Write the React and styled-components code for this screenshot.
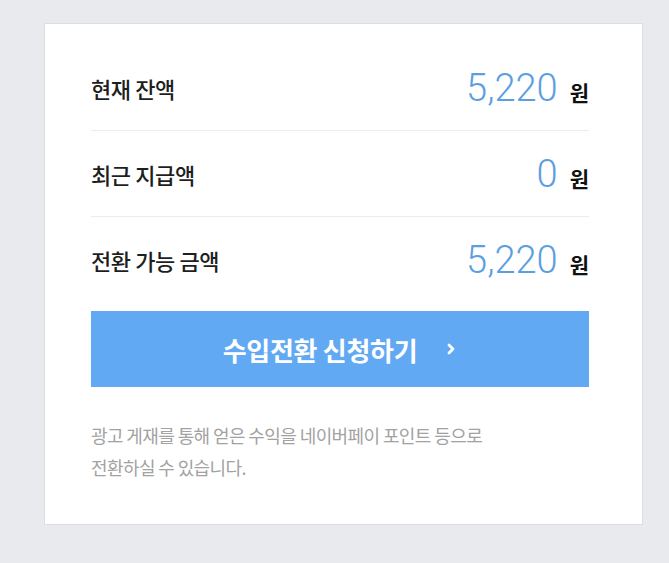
import React from 'react';
import styled, { createGlobalStyle } from 'styled-components';

const GlobalStyle = createGlobalStyle`
  body {
    margin: 0;
    background: #e9eaed;
    font-family: 'Noto Sans CJK KR', 'Noto Sans', sans-serif;
  }
`;

const Page = styled.div`
  padding: 23px 0 40px 44px;
`;

const Card = styled.div`
  width: 599px;
  background: #fff;
  border: 1px solid #dcdee2;
  padding: 21px 53px 41px 46px;
  box-sizing: border-box;
`;

const Row = styled.div`
  display: flex;
  align-items: center;
  justify-content: space-between;
  height: 86px;
  border-bottom: ${p => (p.last ? 'none' : '1px solid #ececee')};
  box-sizing: border-box;
`;

const Label = styled.span`
  font-size: 22px;
  font-weight: 500;
  letter-spacing: -0.4px;
  color: #1e1e1e;
`;

const Value = styled.div`
  display: flex;
  align-items: baseline;
  gap: 12px;
`;

const Amount = styled.span`
  font-family: Roboto, 'Liberation Sans', sans-serif;
  font-weight: 300;
  font-size: 38px;
  color: #5b9ee2;
`;

const Unit = styled.span`
  font-size: 21px;
  font-weight: 700;
  color: #111;
`;

const Button = styled.button`
  display: flex;
  align-items: center;
  justify-content: center;
  gap: 28px;
  width: 100%;
  height: 76px;
  margin-top: 8px;
  border: none;
  background: #62a9f4;
  color: #fff;
  font-family: inherit;
  font-size: 26px;
  font-weight: 700;
  letter-spacing: -0.3px;
  padding: 0;
`;

const Desc = styled.p`
  margin: 32px 0 0;
  font-size: 18px;
  line-height: 32px;
  letter-spacing: -0.6px;
  color: #a2a2a2;
`;

const rows = [
  { label: '현재 잔액', amount: '5,220' },
  { label: '최근 지급액', amount: '0' },
  { label: '전환 가능 금액', amount: '5,220' },
];

const Chevron = () => (
  <svg width="12" height="14" viewBox="0 0 12 14">
    <path d="M4 3l4 4-4 4" fill="none" stroke="#fff" strokeWidth="2.8" strokeLinecap="round" strokeLinejoin="round" />
  </svg>
);

const App = () => (
  <Page>
    <GlobalStyle />
    <Card>
      {rows.map((r, i) => (
        <Row key={r.label} last={i === rows.length - 1}>
          <Label>{r.label}</Label>
          <Value>
            <Amount>{r.amount}</Amount>
            <Unit>원</Unit>
          </Value>
        </Row>
      ))}
      <Button>
        수입전환 신청하기
        <Chevron />
      </Button>
      <Desc>
        광고 게재를 통해 얻은 수익을 네이버페이 포인트 등으로
        <br />
        전환하실 수 있습니다.
      </Desc>
    </Card>
  </Page>
);

export default App;
